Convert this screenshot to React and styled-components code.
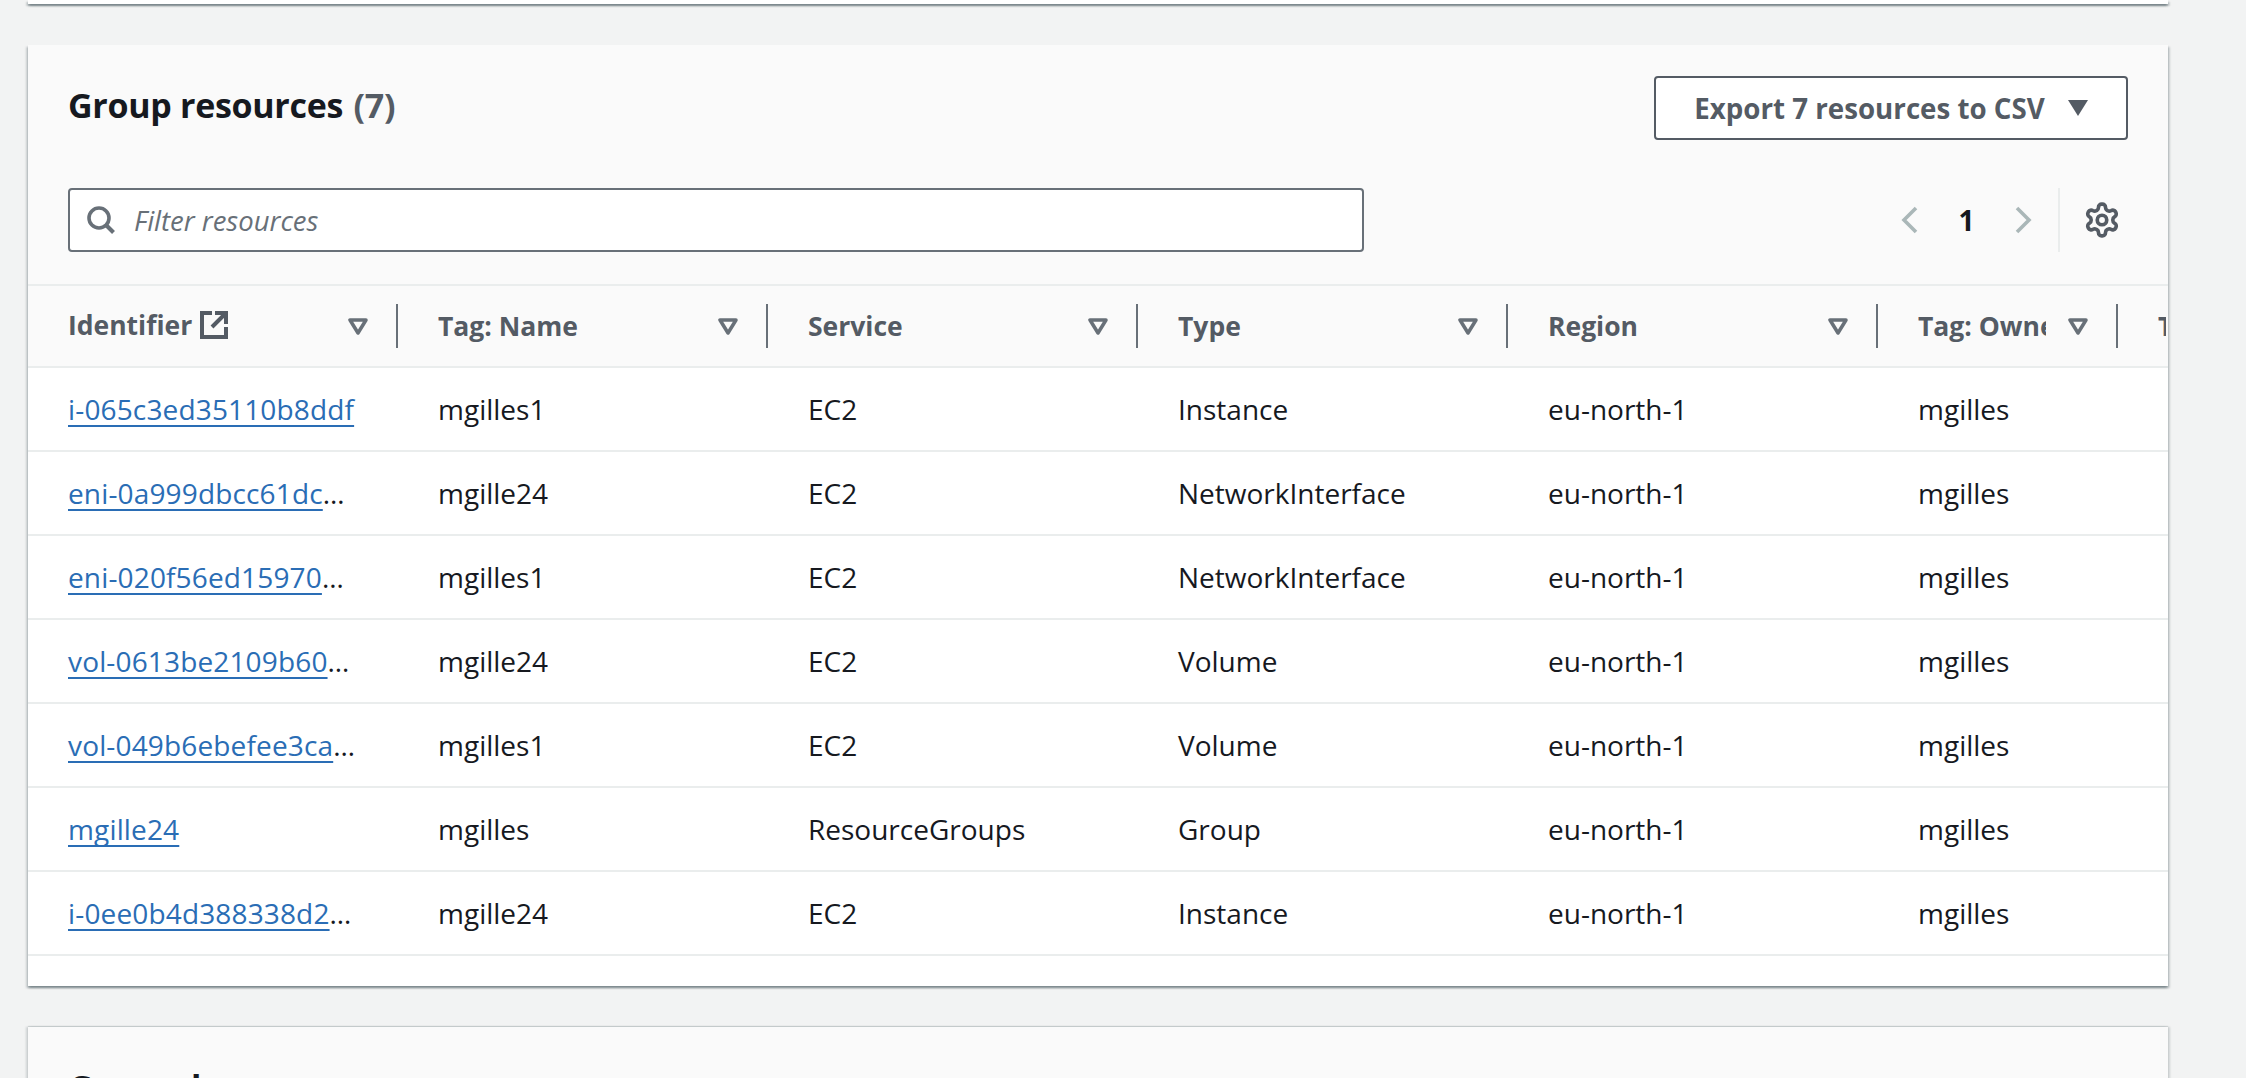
import React from "react";
import styled, { createGlobalStyle } from "styled-components";

const GlobalStyle = createGlobalStyle`
  html, body {
    margin: 0;
    padding: 0;
    height: 100%;
    overflow: hidden;
    background: #f2f3f3;
  }
  body {
    font-family: "Open Sans", "Liberation Sans", sans-serif;
    color: #16191f;
  }
`;

const cardShadow = `0 2px 2px 0 rgba(0, 28, 36, 0.3), 2px 2px 2px 0 rgba(0, 28, 36, 0.15), -2px 2px 2px 0 rgba(0, 28, 36, 0.15)`;
const columnGrid = `370px 370px 370px 370px 370px 240px 100px`;

const Page = styled.div`
  width: 2246px;
  height: 1078px;
  overflow: hidden;
  padding: 0 78px 0 28px;
  box-sizing: border-box;
  display: flex;
  flex-direction: column;
  gap: 41px;
`;

const TopCard = styled.div`
  height: 4px;
  flex: none;
  background: #fff;
  box-shadow: ${cardShadow};
`;

const Card = styled.section`
  flex: none;
  height: 941px;
  background: #fff;
  box-shadow: ${cardShadow};
`;

const Head = styled.div`
  background: #fafafa;
  border-bottom: 2px solid #eaeded;
  height: 241px;
  box-sizing: border-box;
  padding: 31px 40px 0;
`;

const TitleRow = styled.div`
  display: flex;
  justify-content: space-between;
  align-items: flex-start;
  height: 112px;
`;

const Title = styled.h2`
  margin: 0;
  padding-top: 8px;
  font-size: 34px;
  line-height: 42px;
  font-weight: 700;
  letter-spacing: -0.3px;
  color: #16191f;
  span {
    font-weight: 700;
    margin-left: 2px;
    color: #545b64;
  }
`;

const ExportButton = styled.button`
  width: 474px;
  height: 64px;
  box-sizing: border-box;
  background: #fff;
  border: 2px solid #545b64;
  border-radius: 4px;
  color: #545b64;
  font-family: inherit;
  font-size: 27.7px;
  font-weight: 700;
  display: flex;
  align-items: center;
  justify-content: center;
  gap: 23px;
  padding: 0;
`;

const ToolRow = styled.div`
  display: flex;
  align-items: center;
  justify-content: space-between;
  height: 64px;
`;

const Filter = styled.div`
  width: 1296px;
  height: 64px;
  box-sizing: border-box;
  background: #fff;
  border: 2px solid #687078;
  border-radius: 4px;
  display: flex;
  align-items: center;
  gap: 19px;
  padding-left: 17px;
  font-size: 27.5px;
  font-style: italic;
  color: #687078;
`;

const Tools = styled.div`
  display: flex;
  align-items: center;
  height: 64px;
`;

const PageNumber = styled.span`
  font-size: 28px;
  font-weight: 700;
  color: #16191f;
  width: 95px;
  text-align: center;
`;

const ToolDivider = styled.div`
  width: 2px;
  height: 64px;
  margin-left: 26px;
  margin-right: 23px;
  background: #eaeded;
`;

const GearSlot = styled.div`
  display: flex;
  margin-right: 7px;
`;

const Table = styled.div`
  width: 100%;
  overflow: hidden;
`;

const HeaderRow = styled.div`
  display: grid;
  grid-template-columns: ${columnGrid};
  height: 82px;
  box-sizing: border-box;
  background: #fafafa;
  border-bottom: 2px solid #eaeded;
`;

const HeaderCell = styled.div`
  position: relative;
  display: flex;
  align-items: center;
  padding-left: 40px;
  padding-right: 30px;
  font-size: 26.5px;
  font-weight: 700;
  color: #545b64;
  min-width: 0;
  overflow: hidden;
  &::after {
    content: "";
    display: ${(p) => (p.$last ? "none" : "block")};
    position: absolute;
    right: 0;
    top: 18px;
    width: 2px;
    height: 44px;
    background: #687078;
  }
`;

const HeaderLabel = styled.span`
  flex: 1;
  min-width: 0;
  margin-right: 22px;
  white-space: nowrap;
  overflow: hidden;
  display: flex;
  align-items: center;
  gap: 8px;
  margin-top: ${(p) => (p.$raised ? "-2px" : "0")};
`;

const BodyRow = styled.div`
  display: grid;
  grid-template-columns: ${columnGrid};
  height: 84px;
  box-sizing: border-box;
  border-bottom: 2px solid #eaeded;
  align-items: center;
`;

const Cell = styled.div`
  padding: 0 40px;
  font-size: 28px;
  color: #16191f;
  white-space: nowrap;
  overflow: hidden;
  text-overflow: ellipsis;
  line-height: 42px;
`;

const ResLink = styled.a`
  color: #2a6db5;
  letter-spacing: 0.15px;
  text-decoration: underline;
  text-decoration-thickness: 2px;
  text-underline-offset: 5px;
  text-decoration-skip-ink: none;
`;

const NextCard = styled.div`
  flex: none;
  height: 60px;
  background: #fafafa;
  padding: 39px 40px 0;
  box-sizing: border-box;
  box-shadow: 0 -1px 1px 0 rgba(0, 28, 36, 0.1), 2px 0 2px 0 rgba(0, 28, 36, 0.15), -2px 0 2px 0 rgba(0, 28, 36, 0.15);
`;

const NextTitle = styled.h2`
  margin: 0;
  font-size: 34px;
  line-height: 42px;
  font-weight: 700;
  color: #16191f;
`;

const Caret = () => (
  <svg width="20" height="16" viewBox="0 0 20 16">
    <path d="M0 0h20L10 16z" fill="#545b64" />
  </svg>
);

const SortIcon = () => (
  <svg width="20" height="17" viewBox="0 0 20 17" style={{ flex: "none" }}>
    <path d="M2 2h16L10 15z" fill="none" stroke="#687078" strokeWidth="3.5" strokeLinejoin="round" />
  </svg>
);

const SearchIcon = () => (
  <svg width="28" height="28" viewBox="0 0 28 28">
    <circle cx="12" cy="12" r="10" fill="none" stroke="#687078" strokeWidth="3.6" />
    <path d="M18.5 18.5l8 8" stroke="#687078" strokeWidth="4" fill="none" />
  </svg>
);

const Chevron = ({ flip }) => (
  <svg width="18" height="28" viewBox="0 0 18 28">
    <path d={flip ? "M3 2l12 12L3 26" : "M15 2L3 14l12 12"} fill="none" stroke="#aab7b8" strokeWidth="3.6" />
  </svg>
);

const GearIcon = () => (
  <svg width="38" height="38" viewBox="0 0 24 24" fill="none" stroke="#545b64" strokeWidth="2.3" strokeLinecap="round" strokeLinejoin="round">
    <path d="M12.22 2h-.44a2 2 0 0 0-2 2v.18a2 2 0 0 1-1 1.73l-.43.25a2 2 0 0 1-2 0l-.15-.08a2 2 0 0 0-2.73.73l-.22.38a2 2 0 0 0 .73 2.73l.15.1a2 2 0 0 1 1 1.72v.51a2 2 0 0 1-1 1.74l-.15.09a2 2 0 0 0-.73 2.73l.22.38a2 2 0 0 0 2.73.73l.15-.08a2 2 0 0 1 2 0l.43.25a2 2 0 0 1 1 1.73V20a2 2 0 0 0 2 2h.44a2 2 0 0 0 2-2v-.18a2 2 0 0 1 1-1.73l.43-.25a2 2 0 0 1 2 0l.15.08a2 2 0 0 0 2.73-.73l.22-.39a2 2 0 0 0-.73-2.73l-.15-.08a2 2 0 0 1-1-1.74v-.5a2 2 0 0 1 1-1.74l.15-.09a2 2 0 0 0 .73-2.73l-.22-.38a2 2 0 0 0-2.73-.73l-.15.08a2 2 0 0 1-2 0l-.43-.25a2 2 0 0 1-1-1.73V4a2 2 0 0 0-2-2z" />
    <circle cx="12" cy="12" r="3" />
  </svg>
);

const ExternalIcon = () => (
  <svg width="28" height="28" viewBox="0 0 28 28" style={{ flex: "none" }}>
    <path d="M12 2H2v24h24V16" fill="none" stroke="#545b64" strokeWidth="4" />
    <path d="M15 2h11v11M25 3L12 16" fill="none" stroke="#545b64" strokeWidth="4" />
  </svg>
);

const columns = ["Identifier", "Tag: Name", "Service", "Type", "Region", "Tag: Owner", "Tag: Team"];

const rows = [
  ["i-065c3ed35110b8ddf", "mgilles1", "EC2", "Instance", "eu-north-1", "mgilles"],
  ["eni-0a999dbcc61dc45a1", "mgille24", "EC2", "NetworkInterface", "eu-north-1", "mgilles"],
  ["eni-020f56ed159703c21", "mgilles1", "EC2", "NetworkInterface", "eu-north-1", "mgilles"],
  ["vol-0613be2109b6049f1", "mgille24", "EC2", "Volume", "eu-north-1", "mgilles"],
  ["vol-049b6ebefee3ca5d2", "mgilles1", "EC2", "Volume", "eu-north-1", "mgilles"],
  ["mgille24", "mgilles", "ResourceGroups", "Group", "eu-north-1", "mgilles"],
  ["i-0ee0b4d388338d2a7f", "mgille24", "EC2", "Instance", "eu-north-1", "mgilles"],
];

export default function App() {
  return (
    <>
      <GlobalStyle />
      <Page>
        <TopCard />
        <Card>
          <Head>
            <TitleRow>
              <Title>
                Group resources <span>(7)</span>
              </Title>
              <ExportButton>
                Export 7 resources to CSV
                <Caret />
              </ExportButton>
            </TitleRow>
            <ToolRow>
              <Filter>
                <SearchIcon />
                Filter resources
              </Filter>
              <Tools>
                <Chevron />
                <PageNumber>1</PageNumber>
                <Chevron flip />
                <ToolDivider />
                <GearSlot>
                  <GearIcon />
                </GearSlot>
              </Tools>
            </ToolRow>
          </Head>
          <Table>
            <HeaderRow>
              {columns.map((col, i) => (
                <HeaderCell key={col} $last={i === columns.length - 1}>
                  <HeaderLabel $raised={i === 0}>
                    {col}
                    {i === 0 && <ExternalIcon />}
                  </HeaderLabel>
                  {i < columns.length - 1 && <SortIcon />}
                </HeaderCell>
              ))}
            </HeaderRow>
            {rows.map((row) => (
              <BodyRow key={row[0]}>
                {row.map((val, i) => (
                  <Cell key={i}>{i === 0 ? <ResLink>{val}</ResLink> : val}</Cell>
                ))}
              </BodyRow>
            ))}
          </Table>
        </Card>
        <NextCard>
          <NextTitle>General</NextTitle>
        </NextCard>
      </Page>
    </>
  );
}
